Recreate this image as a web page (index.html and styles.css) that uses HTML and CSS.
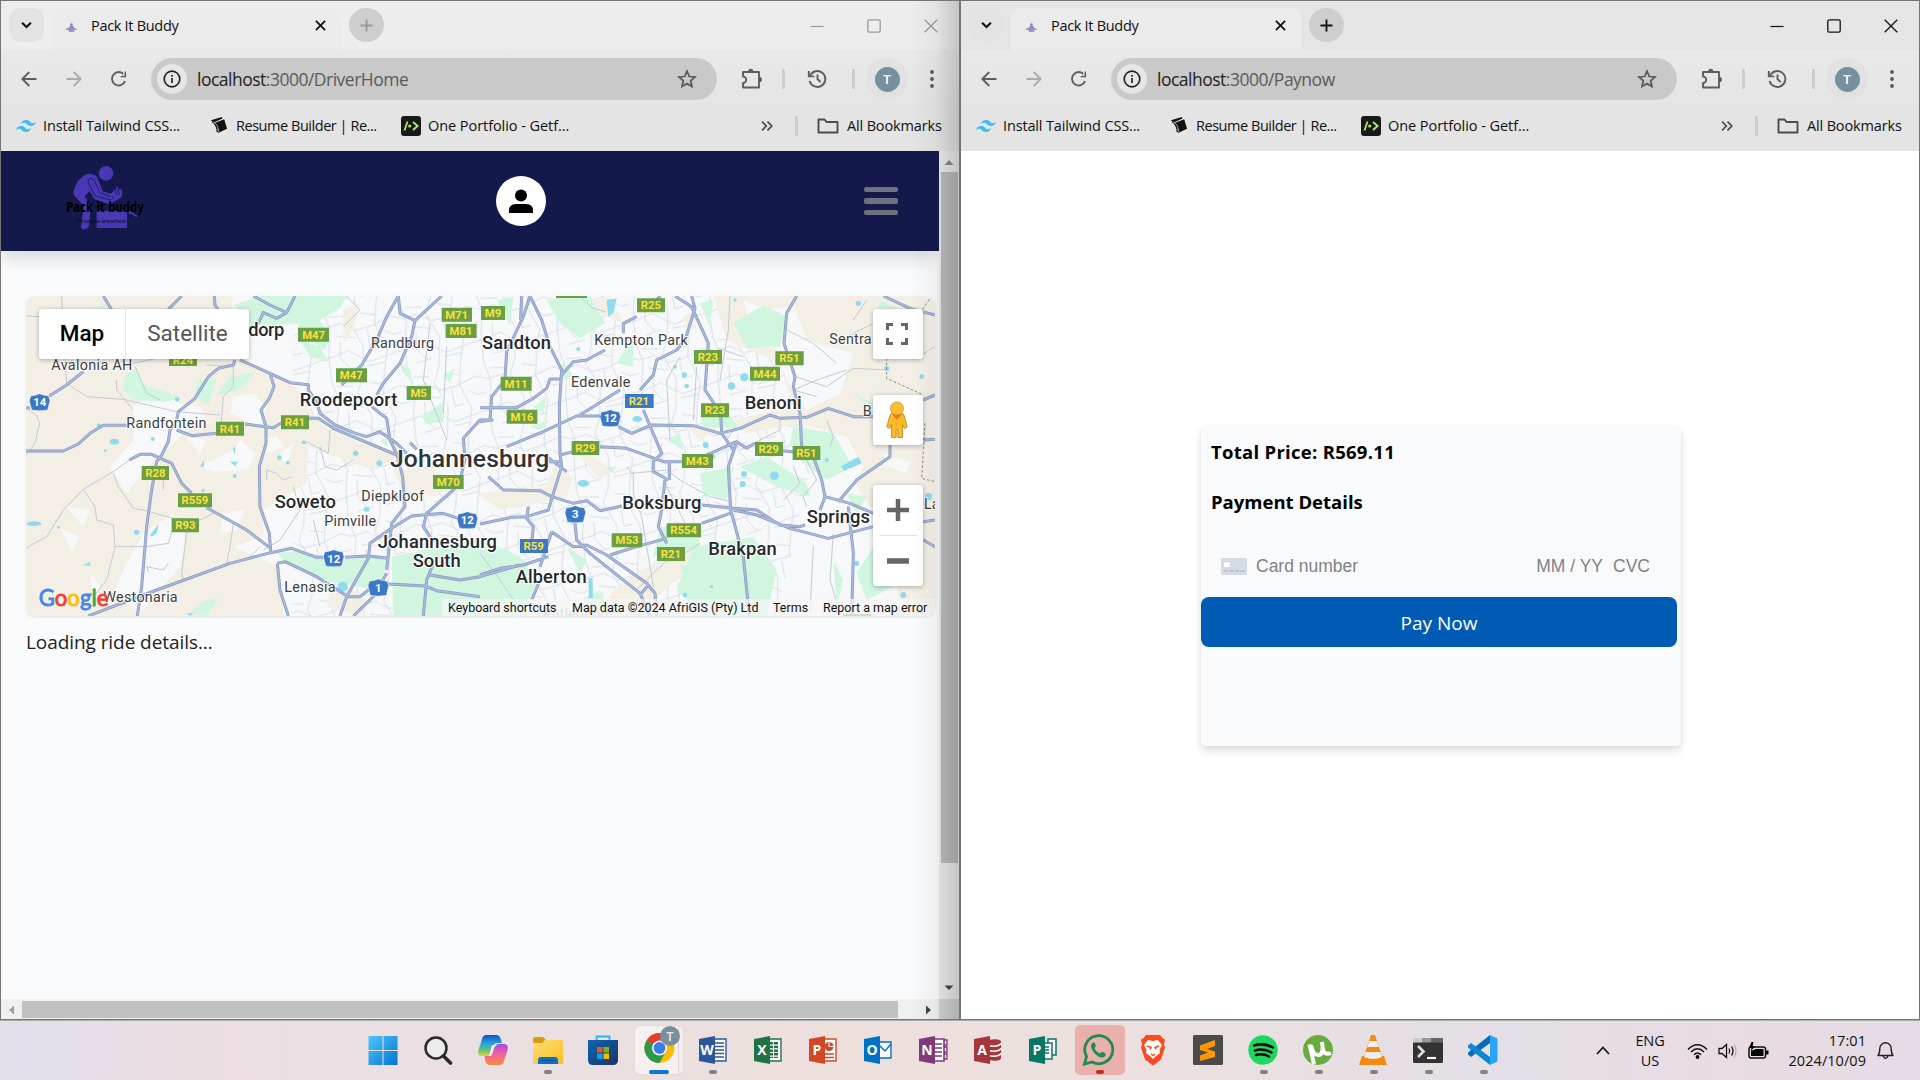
FILE: index.html
```html
<!DOCTYPE html>
<html lang="en">
<head>
<meta charset="utf-8">
<title>Pack It Buddy</title>
<link rel="stylesheet" href="styles.css">
</head>
<body>
<svg class="defs" width="0" height="0">
  <defs>
    <symbol id="i-chev" viewBox="0 0 12 8"><path d="M1.2 1.5 6 6.2l4.800-4.700" fill="none" stroke="#111" stroke-width="2.300"/></symbol>
    <symbol id="i-fav" viewBox="0 0 12 10"><circle cx="6" cy="1.800" r="1.500" fill="#8a7de0"/><path d="M3 5 5 3 8.500 4l.5 2H3z" fill="#8d82d4"/><path d="M0 6h11l1 1.500H0z" fill="#777380"/><path d="M3 7.500h6V10H3z" fill="#9f8ff0"/></symbol>
    <symbol id="i-close" viewBox="0 0 12 12"><path d="M1 1l10 10M11 1 1 11" fill="none" stroke="#111" stroke-width="2"/></symbol>
    <symbol id="i-plus" viewBox="0 0 14 14"><path d="M7 .5v13M.5 7h13" stroke="currentColor" stroke-width="2" fill="none"/></symbol>
    <symbol id="i-back" viewBox="0 0 16 16"><path d="M15.500 8H1.500M8.300 1 1.300 8l7 7" fill="none" stroke="currentColor" stroke-width="1.900"/></symbol>
    <symbol id="i-fwd" viewBox="0 0 16 16"><path d="M.5 8h14M7.700 1l7 7-7 7" fill="none" stroke="currentColor" stroke-width="1.900"/></symbol>
    <symbol id="i-reload" viewBox="0 0 16 16"><path d="M14 10.200A6.700 6.700 0 1 1 13 3.600L14.800 5.600" fill="none" stroke="#5a5e62" stroke-width="1.900"/><path d="M15 0v6.200H9z" fill="#5a5e62"/><path d="M13 .9v3.300H9.600" fill="none" stroke="#e6e6e6" stroke-width="1.200"/></symbol>
    <symbol id="i-info" viewBox="0 0 18 18"><circle cx="9" cy="9" r="7.800" fill="none" stroke="#222" stroke-width="1.700"/><path d="M9 8v5M9 5v1.800" stroke="#222" stroke-width="1.700"/></symbol>
    <symbol id="i-star" viewBox="0 0 20 20"><path d="M10 2.200l2.300 5.300 5.700.5-4.300 3.800 1.300 5.700-5-3-5 3 1.300-5.700L2 8l5.700-.5z" fill="none" stroke="#55585c" stroke-width="1.700"/></symbol>
    <symbol id="i-ext" viewBox="0 0 22 22"><path d="M3 4h16v15.500H3v-4.500a3 3 0 0 0 0-6.500z" fill="none" stroke="#5a5e62" stroke-width="1.900" stroke-linejoin="round"/><path d="M8.500 3.500a2.300 2.300 0 0 1 4.600 0zM19.300 9.300a2.300 2.300 0 0 1 0 4.600z" fill="#5a5e62" stroke="#5a5e62"/></symbol>
    <symbol id="i-hist" viewBox="0 0 20 20"><path d="M2.600 12A8 8 0 1 0 4.200 4.800L1.800 7.300" fill="none" stroke="#5a5e62" stroke-width="1.900"/><path d="M1.800 2v5.400h5.500M10.500 5.500V10l3.200 3.200" fill="none" stroke="#5a5e62" stroke-width="1.900"/></symbol>
    <symbol id="i-more" viewBox="0 0 4 18"><circle cx="2" cy="2" r="1.900"/><circle cx="2" cy="9" r="1.900"/><circle cx="2" cy="16" r="1.900"/></symbol>
    <symbol id="i-tw" viewBox="0 0 20 12"><path d="M5 4q1.200-4 5-4c3.800 0 4 2.800 6 3.200 1.300.3 2.500-.2 4-1.200q-1.200 4-5 4c-3.800 0-4-2.600-6-3.200Q7 2.400 5 4zM0 10q1.200-4 5-4c3.800 0 4 2.800 6 3.200 1.300.3 2.500-.2 4-1.200q-1.200 4-5 4c-3.800 0-4-2.600-6-3.200Q2 8.400 0 10z" fill="#38bdf8"/></symbol>
    <symbol id="i-resume" viewBox="0 0 18 18"><path d="M0 3.500 11.500 0l.6 1.500L2.500 6z" fill="#111"/><path d="M3 6.500 14 2.500l3 10L7.500 17 7 12z" fill="#111"/><path d="M1.500 5.300Q6 7.500 6.800 16" fill="none" stroke="#111" stroke-width="1.400"/><path d="M2.500 5.500Q7.500 7 8.200 16" fill="none" stroke="#e6e6e6" stroke-width=".7"/></symbol>
    <symbol id="i-one" viewBox="0 0 20 20"><rect width="20" height="20" rx="3" fill="#171a17"/><path d="M3.500 14.500 6.500 5.500" stroke="#a7e86a" stroke-width="1.800"/><circle cx="8.700" cy="10" r="1.600" fill="#a7e86a"/><path d="M12 6l4.600 4-4.600 4" fill="none" stroke="#a7e86a" stroke-width="2"/></symbol>
    <symbol id="i-dbl" viewBox="0 0 12 10"><path d="M1 .7 5.300 5 1 9.300M6.500.7 10.800 5 6.500 9.300" fill="none" stroke="#4a4d50" stroke-width="1.700"/></symbol>
    <symbol id="i-folder" viewBox="0 0 22 16"><path d="M1.500 14.500v-13h6l2 2.500h11v10.500z" fill="none" stroke="#4a4d50" stroke-width="1.900" stroke-linejoin="round"/></symbol>
    <symbol id="i-min" viewBox="0 0 14 14"><path d="M.5 7.500h13" stroke="currentColor" stroke-width="1.200"/></symbol>
    <symbol id="i-max" viewBox="0 0 14 14"><rect x=".8" y=".8" width="12.400" height="12.400" rx="1.500" fill="none" stroke="currentColor" stroke-width="1.300"/></symbol>
    <symbol id="i-x" viewBox="0 0 14 14"><path d="M.7.7l12.600 12.600M13.300.7.700 13.300" stroke="currentColor" stroke-width="1.300"/></symbol>
    <symbol id="nat" viewBox="0 0 64 54"><path d="M5 8Q20 6 32 1q12 5 27 7l4 14-7 28q-24 5-48 0L1 22z" fill="#3c78c8" stroke="#fff" stroke-width="1.500"/></symbol>
    <linearGradient id="gw" x2="1" y2="1"><stop offset="0" stop-color="#4cc9fb"/><stop offset="1" stop-color="#0473d0"/></linearGradient>
    <linearGradient id="gs" x2="1" y2="1"><stop offset="0" stop-color="#0a66b4"/><stop offset="1" stop-color="#1e3560"/></linearGradient>
    <linearGradient id="gf" x2="1" y2="1"><stop offset="0" stop-color="#ffdf70"/><stop offset="1" stop-color="#f8bd2a"/></linearGradient>
    <linearGradient id="c1" x2="0" y2="1"><stop offset="0" stop-color="#1450c8"/><stop offset=".4" stop-color="#22a4e0"/><stop offset=".75" stop-color="#6cc46a"/><stop offset="1" stop-color="#e8d23c"/></linearGradient>
    <linearGradient id="c2" x2="0" y2="1"><stop offset="0" stop-color="#a64ae8"/><stop offset=".5" stop-color="#f0649a"/><stop offset="1" stop-color="#ff8a3c"/></linearGradient>
    <pattern id="streets" width="230" height="210" patternUnits="userSpaceOnUse" patternTransform="rotate(-7)">
      <path d="M0 40 35 52 80 44 120 70 170 62 230 40M0 150 50 140 90 128 150 168 230 150M30 0 45 60 32 130 30 210M125 0 105 45 138 120 125 210M190 0 180 60 208 135 190 210M60 80 118 92M45 20 95 25M145 180 198 175M60 190 110 180M70 98 66 148 90 180M142 20 182 30M155 70 158 122 185 118M205 80 230 95M0 95 28 92" fill="none" stroke="#d6dce7" stroke-width="2.800"/>
    </pattern>
  </defs>
</svg>

<div class="desktop">
  <main class="windows">
    <section class="window inactive">
      <div class="tabs">
        <span class="tabmenu"><svg width="11" height="8"><use href="#i-chev"/></svg></span>
        <div class="tab"><svg class="fav" width="11" height="9"><use href="#i-fav"/></svg><span class="tabtitle">Pack It Buddy</span><svg width="11" height="11"><use href="#i-close"/></svg></div>
        <span class="newtab"><svg width="13" height="13"><use href="#i-plus"/></svg></span>
        <div class="winctl"><span><svg width="14" height="14"><use href="#i-min"/></svg></span><span><svg width="14" height="14"><use href="#i-max"/></svg></span><span><svg width="14" height="14"><use href="#i-x"/></svg></span></div>
      </div>
      <div class="toolbar">
        <span class="nav"><svg width="16" height="16"><use href="#i-back"/></svg></span>
        <span class="nav dim"><svg width="16" height="16"><use href="#i-fwd"/></svg></span>
        <span class="nav"><svg width="16" height="16"><use href="#i-reload"/></svg></span>
        <div class="omnibox"><span class="info"><svg width="18" height="18"><use href="#i-info"/></svg></span><span class="url">localhost<i>:3000/DriverHome</i></span><svg width="20" height="20"><use href="#i-star"/></svg></div>
        <span class="ext"><svg width="22" height="22"><use href="#i-ext"/></svg></span>
        <span class="sep s1"></span>
        <span class="hist"><svg width="20" height="20"><use href="#i-hist"/></svg></span>
        <span class="sep s2"></span>
        <span class="profile"><b>T</b></span>
        <span class="more"><svg width="4" height="18"><use href="#i-more"/></svg></span>
      </div>
      <div class="bookmarks">
        <svg width="20" height="12"><use href="#i-tw"/></svg><span class="bm b1">Install Tailwind CSS...</span>
        <svg width="17" height="17"><use href="#i-resume"/></svg><span class="bm b2">Resume Builder | Re...</span>
        <svg width="20" height="20"><use href="#i-one"/></svg><span class="bm b3">One Portfolio - Getf...</span>
        <svg class="dbl" width="12" height="10"><use href="#i-dbl"/></svg><span class="sep s3"></span>
        <svg width="22" height="16"><use href="#i-folder"/></svg><span class="bm b4">All Bookmarks</span>
      </div>
      <div class="viewport">
        <div class="page driver">
          <header class="appbar">
            <svg class="logo" width="84" height="72" viewBox="192 492 252 216">
              <g fill="#4a37b5"><circle cx="318" cy="520" r="22"/>
              <path d="M222 572q4-30 34-48 22-8 36 8l16 42 24 7 14-14 4-8 4 2 4 8 6-3 3 10-2 16-28 16-14 3-40-14-14-24-15 16 17 28v22l-5 42q-12 14-23 2l8-66-22-24q-10-8-9-21z"/>
              <path d="M290 632h91v52h-91zM385 630l28 18-2 4-26-14z"/></g>
              <path d="M264 546q2-14 12-10 8 2 12 16l12 26 32 12M264 546l22 42 46 12q10-2 6-12M344 562l6 24M352 562l6 22" fill="none" stroke="#13194b" stroke-width="2.500"/>
              <text x="198" y="635" textLength="234" lengthAdjust="spacingAndGlyphs" class="brand">Pack it buddy</text>
              <text x="228" y="668" textLength="150" lengthAdjust="spacingAndGlyphs" class="tagline">Move you anywhere</text>
            </svg>
            <span class="user"><svg width="24" height="24" viewBox="0 0 24 24"><circle cx="12" cy="6.500" r="6"/><path d="M0 24v-2.500Q0 15 7 15h10q7 0 7 6.500V24z"/></svg></span>
            <span class="burger"><i></i><i></i><i></i></span>
          </header>
          <div class="mapbox">
            <svg class="map" width="909" height="320" viewBox="78 48 2727 960">
              <rect x="78" y="48" width="2727" height="960" fill="#f7f8f9"/>
              <rect x="880" y="48" width="1560" height="960" fill="url(#streets)"/>
              <g fill="#f4efe5">
                <path d="M78 48H700L690 130 740 240 900 330 930 400 990 450 1190 530 1120 570 925 500 920 610 790 690 790 770 700 800 840 860 850 1008H78z"/>
                <path d="M2140 48H2805V1008H2700L2670 700 2540 660 2590 560 2540 470 2400 430 2240 460 2200 420 2380 380 2340 250 2180 180z"/>
                <path d="M1430 640 1640 620 1660 560 1720 590 1700 650 1500 690zM1960 850 2080 780 2110 840 1990 930 1940 1008H1780L1850 920zM1180 570 1280 560 1380 610 1300 650 1200 620zM1030 90 1080 70 1060 150 1030 190zM1780 60 1830 48 1870 130 1800 100zM2040 120 2080 90 2090 150zM2380 800 2450 850 2420 1000 2370 930zM1000 890 1100 960 1080 1008 980 980zM1700 480 1800 600 1840 570zM2040 420 2100 480 2170 430 2090 440z"/>
              </g>
              <g fill="#f7f8f9">
                <path d="M400 380 460 330 540 370 600 380 630 430 560 450 510 500 440 560 380 640 330 560 400 480zM600 560 700 510 720 480 770 520 740 570 640 575zM700 350 760 340 800 380 780 440 690 400zM430 760 520 700 560 760 540 860 420 1000 340 940 370 870zM2290 90 2380 80 2420 180 2560 220 2520 340 2420 390 2360 300zM2430 560 2560 600 2620 700 2520 820 2420 980 2340 960 2380 800zM840 520 880 490 860 560zM670 700 730 690 710 750 660 760zM2650 520 2730 545 2720 580 2660 560z"/>
                <path d="M2230 60 2310 90 2280 120 2240 100zM500 90 560 110 540 140zM200 680 270 690 250 740zM180 745 240 770 215 815zM560 470 620 480 600 520zM270 880 300 920 280 960zM790 470 830 470 850 500 800 520z"/>
              </g>
              <g fill="#d0f6e0">
                <path d="M700 75 780 48H1040L1020 85 960 120 990 170 975 210 930 180 890 130 760 140 730 100zM370 330 375 285 410 265 430 315 545 350 500 365 400 360zM590 300 650 295 625 375 585 350zM690 290 770 275 720 330 650 345zM830 820 900 812 980 840 1170 830 1130 930 960 900 860 850zM1175 830 1440 775 1560 830 1610 900 1570 1008H1180zM570 1000 610 962 655 955 620 1008zM1265 410 1330 365 1330 425 1280 432zM1330 285 1365 265 1350 310zM900 180 960 200 985 245 930 230zM280 85 320 70 310 90zM1140 480 1165 475 1160 500zM1195 240 1230 270 1240 310 1210 280z"/>
                <path d="M1640 60 1770 48 1815 130 1740 175 1680 130zM2200 130 2290 75 2360 110 2340 200 2240 205zM2380 440 2500 460 2560 560 2480 600 2400 540 2370 490zM2100 400 2180 395 2220 445 2110 440zM2080 800 2260 770 2330 870 2300 1008H2110L2030 930zM1980 740 2090 750 2100 800 1960 830zM2570 880 2620 800 2680 920 2600 960zM2220 560 2300 530 2420 610 2430 650 2330 620zM2640 60 2700 90 2680 150 2630 130zM2100 580 2200 560 2180 660 2110 640zM2560 340 2620 370 2700 420 2620 400zM1700 800 1760 840 1740 880zM1880 200 1900 190 1900 260 1850 250zM1690 240 1720 290 1680 300zM2040 850 2100 880 2060 940zM2540 640 2600 650 2570 700zM2500 840 2530 900 2510 980zM1740 960 1800 930 1820 990zM1600 380 1640 350 1630 400zM1590 440 1650 420 1620 450zM1490 60 1540 50 1530 140 1510 90zM1820 560 1850 560 1830 580zM2100 70 2140 60 2130 140zM2000 480 2040 460 2050 510z"/>
              </g>
              <g fill="#8fdaee">
                <ellipse cx="343" cy="485" rx="14" ry="9"/><ellipse cx="102" cy="731" rx="22" ry="7"/><path d="M450 765 476 732 470 760 455 770zM250 855 270 846 272 858zM690 545 714 545 705 558zM600 560 612 540 612 560zM560 1000 580 1000 570 1008zM698 505 706 500 705 525z"/><circle cx="531" cy="358" r="7"/><circle cx="458" cy="477" r="6"/><circle cx="297" cy="436" r="6"/><circle cx="410" cy="757" r="8"/><circle cx="838" cy="533" r="7"/><circle cx="912" cy="487" r="6"/><circle cx="1067" cy="520" r="8"/><ellipse cx="1100" cy="688" rx="9" ry="7"/><circle cx="1028" cy="920" r="15"/><circle cx="1138" cy="550" r="9"/><circle cx="609" cy="632" r="5"/><circle cx="704" cy="588" r="6"/><circle cx="863" cy="548" r="6"/><circle cx="316" cy="512" r="4"/><circle cx="176" cy="742" r="4"/>
                <ellipse cx="1750" cy="610" rx="17" ry="10"/><path d="M1765 895h12l2 60h-12zM2520 560 2575 530 2585 550 2550 565zM1820 60 1850 55 1840 100 1825 110z"/><circle cx="2194" cy="318" r="11"/><circle cx="2053" cy="285" r="8"/><circle cx="2060" cy="318" r="7"/><circle cx="2117" cy="495" r="9"/><circle cx="2233" cy="292" r="12"/><circle cx="2323" cy="587" r="13"/><circle cx="2232" cy="582" r="9"/><circle cx="2228" cy="612" r="9"/><circle cx="2575" cy="70" r="8"/><circle cx="2660" cy="265" r="8"/><circle cx="2765" cy="290" r="7"/><ellipse cx="1912" cy="417" rx="15" ry="9"/><circle cx="2570" cy="850" r="8"/><circle cx="2710" cy="945" r="9"/><circle cx="2055" cy="945" r="7"/><circle cx="2480" cy="540" r="6"/><circle cx="2785" cy="650" r="11"/><circle cx="2025" cy="260" r="6"/><circle cx="2205" cy="60" r="5"/><circle cx="1735" cy="207" r="6"/><circle cx="2140" cy="530" r="6"/><circle cx="2535" cy="565" r="7"/><circle cx="2135" cy="920" r="5"/>
              </g>
              <g class="minor">
                <path d="M185 48 188 100 200 310 260 350 370 358 430 372 530 395 660 405M78 108 120 110M400 250 470 235M405 260 440 340 480 360M350 300 350 330 400 390M78 384 110 405 118 430 105 490 78 525M700 255 700 320 670 350 662 450M78 804 140 770 190 690 250 628 340 575 388 540M250 628 285 680 290 720 340 735 345 800 320 900 280 950M340 580 355 620 400 685 430 690 520 715 600 720 640 700M345 800 440 800 505 790 520 740M505 850 490 870 440 860 445 875M560 740 555 800 545 880 550 900M700 730 690 800 680 850M470 560 490 600 490 630M620 255 700 260M990 450 985 520 920 485"/>
                <path d="M1040 48 1080 90 1030 140M800 600 800 570 830 580 850 600 875 590M960 500 975 560 1010 570 1060 540M1740 50 1780 85 1815 95M1880 560 1895 580 2000 570 2040 600 2130 650 2190 665M1900 575V640L1925 710 1960 920M2190 48 2185 150 2160 300M2155 205 2230 230M2360 150 2440 190 2510 250M2560 120 2600 60M2220 510 2260 490 2340 450 2340 420M2480 420 2500 470 2490 500M2385 290 2480 320 2560 265 2660 270M2420 540 2450 600 2410 650 2420 680M2540 170 2640 120M2740 240 2805 200M1910 930 1990 850 2025 830M2100 790 2040 830M1990 600 2030 680 2060 740M1440 820 1500 900 1540 960M2380 560 2400 610 2350 660M2200 450 2180 480M2450 350 2380 330 2450 300 2540 270M2040 230 2000 300 2010 480M2090 260 2080 420M2440 800 2430 1000M2500 760 2490 900 2520 1000M1290 130 1270 300 1340 480M1340 200 1330 400M790 810 840 780 900 690 880 620M940 720 960 800M560 150 500 230M740 840 780 800"/>
              </g>
              <g class="roads">
                <g id="net">
                  <path d="M78 513H190L235 492 270 460 310 436H380M530 450 575 467 650 460M735 432 820 443 845 428M925 415H955L1000 445 1190 525M250 275 200 315 148 348M78 384H90M310 48 335 90M545 48 505 88M643 48 645 75 655 90M885 48 860 98 810 75 760 48M860 98 830 115 790 98 775 130"/>
                  <path d="M705 240 700 255 655 265 625 290 585 355 535 395 530 420 510 450 505 485 485 525 470 545 455 630 440 740 425 920 412 1008M720 240 810 280 870 308 925 314V330L950 365 960 400 1005 435 1060 458 1100 470 1140 455 1190 490 1220 520M810 280 822 320 808 355 783 390 798 440V490L778 560 780 680 808 760 812 815"/>
                  <path d="M265 1008 470 930 690 850 812 818 875 805 950 832H970M1035 832 1105 828 1165 835M388 540 420 523H455L515 550 545 610 575 640M620 683 740 750 808 802M1195 48 1160 110 1130 180 1085 255 1025 315M1195 48 1200 100 1245 122 1325 48M1245 122 1235 170 1200 250 1150 310 1130 345M1115 380 1160 415 1170 480 1190 520 1208 590 1215 680 1175 730 1170 780 1160 870"/>
                  <path d="M1395 540 1380 600 1360 630 1280 700 1270 740 1300 785M1175 745 1235 708 1330 700 1375 715M1175 745 1110 790 1105 835 1040 950 1020 1008M1160 880 1120 950 1060 1008M1165 912 1275 918 1310 932 1440 950M832 850 855 845 950 890 1045 950H1080L1130 910M832 850 840 930 865 1008M1480 420 1440 420 1390 475 1395 540M1560 855 1440 890 1380 900 1290 885M1300 850 1280 900 1270 1008M1230 488 1250 508"/>
                  <g transform="translate(1440 0)">
                    <path d="M150 48 130 110 80 215 75 300 35 350 30 420 0 425M125 48 122 120M150 48 185 120 210 200 245 270 238 380 240 520 245 560 220 640 205 690 140 710 95 712 0 732M0 383H110L160 355 200 325 210 297H245M245 285 280 245 320 240 375 210M80 500 190 455 290 408H360M415 440 455 460 515 435 640 437 720 460 780 445 870 405 900 415 980 412 1045 385 1120 410H1180"/>
                    <path d="M585 48 635 80 685 190 675 330 722 400 725 460 760 510M635 48 645 85 615 180 590 210 530 240 520 285 480 330M490 390 545 520 520 545V575L565 600M430 160V130L470 110M540 48 530 60M240 525 280 515M360 500 440 505 550 545H610M670 530 770 485 800 505 825 490M568 545V600M555 600 545 690 535 740 560 790M25 590 70 630 180 632 215 650 280 670 320 662 360 692 425 678M665 675 760 685 830 690 900 735 960 740 975 735M760 690 830 705 930 745 1045 775 1180 740"/>
                    <path d="M285 730 290 780 330 820 480 940 510 1008M215 755 280 800 320 795 380 825 500 910 525 940 530 1008M390 825 470 800 560 775M480 945 505 915M665 730 750 700M770 485 745 560 752 690 790 830 808 1008M950 48 920 100 912 190 945 290 940 320 960 400 965 500M905 512 940 515M1000 530 1025 600 1035 650 1110 670 1180 700M1035 650 1020 690M1105 680 1120 820 1115 1008M1230 495V530L1130 600 1075 665M1210 48 1290 85 1365 105M1330 360 1365 345M1330 780 1365 800M1330 725 1365 720M1330 480 1365 478M0 885 60 865 130 855 205 830M215 755 180 860M180 900 155 960M145 680 140 715 160 740 155 790M300 405 420 330M200 530 260 575M200 545H245"/>
                  </g>
                </g>
              </g>
              <use href="#net" class="fill"/>
              <path d="M2660 220V295L2770 345M2775 430 2765 595 2805 605M2760 100 2790 55" fill="none" stroke="#777" stroke-width="2.500" stroke-dasharray="8 6"/>
              <g class="shield">
                <path d="M1325 83h91v42h-91zM1337 132h93v42h-93zM894 143h93v42h-93zM1008 265h93v42h-93zM1220 318h73v42h-73zM507 219h84v39h-84zM648 425h84v42h-84zM843 406h84v42h-84zM425 558h82v42h-82zM534 640h102v42H534zM515 715h82v42h-82zM1299 585h92v42h-92zM1443 78h72v42h-72zM1911 55h84v42h-84zM1668 15h93v39h-93zM2082 210h84v42h-84zM2326 214h85v42h-85zM2250 260h90v42h-90zM1502 290h93v42h-93zM1520 389h92v42h-92zM2103 370h84v42h-84zM1715 483h83v42h-83zM2046 522h93v42h-93zM2265 486h84v42h-84zM2378 498h83v42h-83zM2000 730h103v42h-103zM1835 760h92v42h-92zM1971 801h84v42h-84zM2530 1002h84v6h-84z" fill="#6a9f43"/>
                <path d="M1875 342h86v42h-86zM1560 777h84v42h-84z" fill="#3c78c8"/>
                <text x="1370" y="116">M71</text><text x="1383" y="165">M81</text><text x="941" y="176">M47</text><text x="1054" y="298">M47</text><text x="1256" y="351">M5</text><text x="549" y="252">R24</text><text x="690" y="458">R41</text><text x="885" y="439">R41</text><text x="466" y="591">R28</text><text x="585" y="673">R559</text><text x="556" y="748">R93</text><text x="1345" y="619">M70</text><text x="1479" y="111">M9</text><text x="1953" y="88">R25</text><text x="2124" y="243">R23</text><text x="2368" y="247">R51</text><text x="2295" y="293">M44</text><text x="1548" y="323">M11</text><text x="1566" y="422">M16</text><text x="1917" y="375">R21</text><text x="2145" y="403">R23</text><text x="1756" y="515">R29</text><text x="2092" y="555">M43</text><text x="2306" y="519">R29</text><text x="2419" y="531">R51</text><text x="2051" y="763">R554</text><text x="1881" y="793">M53</text><text x="2013" y="834">R21</text><text x="1601" y="810">R59</text>
              </g>
              <g class="nat">
                <use href="#nat" x="87" y="340" width="64" height="54"/><use href="#nat" x="1370" y="694" width="64" height="54"/><use href="#nat" x="969" y="808" width="64" height="54"/><use href="#nat" x="1103" y="896" width="64" height="54"/><use href="#nat" x="1799" y="388" width="64" height="54"/><use href="#nat" x="1694" y="676" width="64" height="54"/>
                <text x="119" y="379">14</text><text x="1402" y="733">12</text><text x="1001" y="848">12</text><text x="1135" y="936">1</text><text x="1831" y="427">12</text><text x="1726" y="715">3</text>
              </g>
              <g class="town">
                <text x="154" y="270" textLength="243">Avalonia AH</text><text x="379" y="443" textLength="240">Randfontein</text><text x="1113" y="205" textLength="189">Randburg</text><text x="1084" y="664" textLength="188">Diepkloof</text><text x="973" y="739" textLength="155">Pimville</text><text x="853" y="935" textLength="154">Lenasia</text><text x="310" y="965" textLength="223">Westonaria</text><text x="1783" y="195" textLength="280">Kempton Park</text><text x="1713" y="320" textLength="178">Edenvale</text><text x="2488" y="192" textLength="127">Sentra</text><text x="2588" y="407">B</text><text x="2772" y="688">La</text><text x="1628" y="1018" textLength="198" opacity=".4">Katlehong</text>
              </g>
              <g class="city">
                <text x="745" y="168" textLength="108">dorp</text><text x="899" y="378" textLength="293">Roodepoort</text><text x="824" y="685" textLength="184">Soweto</text><text x="1133" y="804" textLength="358">Johannesburg</text><text x="1238" y="860" textLength="144">South</text><text x="1446" y="206" textLength="207">Sandton</text><text x="2234" y="386" textLength="171">Benoni</text><text x="1867" y="688" textLength="237">Boksburg</text><text x="2420" y="730" textLength="190">Springs</text><text x="2125" y="826" textLength="205">Brakpan</text><text x="1547" y="908" textLength="213">Alberton</text><text class="capital" x="1170" y="560" textLength="478">Johannesburg</text>
              </g>
              <text class="google" x="116" y="978" textLength="209" lengthAdjust="spacingAndGlyphs"><tspan fill="#4285f4" stroke="#4285f4">G</tspan><tspan fill="#ea4335" stroke="#ea4335">o</tspan><tspan fill="#fbbc04" stroke="#fbbc04">o</tspan><tspan fill="#4285f4" stroke="#4285f4">g</tspan><tspan fill="#34a853" stroke="#34a853">l</tspan><tspan fill="#ea4335" stroke="#ea4335">e</tspan></text>
            </svg>
            <div class="maptype"><span class="on">Map</span><span>Satellite</span></div>
            <div class="mapctl">
              <span class="mbtn"><svg width="22" height="22" viewBox="0 0 22 22"><path d="M1.500 7V1.500H7M15 1.500h5.500V7M20.500 15v5.500H15M7 20.500H1.500V15" fill="none" stroke="#666" stroke-width="3"/></svg></span>
              <span class="mbtn peg"><svg width="22" height="38" viewBox="0 0 22 38"><path d="M6 12 4 14 .8 26l2.700 1.500 2-4V36.500h4.700V29h1.600v7.500h4.700V23.500l2 4 2.700-1.500L18 14l-2-2z" fill="#fbb928" stroke="#b88421" stroke-width=".8"/><path d="M6 13h10l-5 6z" fill="#e07b28"/><circle cx="11" cy="7.500" r="6.500" fill="#fdbf2d" stroke="#c99228" stroke-width=".8"/></svg></span>
              <span class="zoomctl"><svg width="22" height="22" viewBox="0 0 22 22"><path d="M11 0v22M0 11h22" stroke="#666" stroke-width="4.500"/></svg><i></i><svg width="22" height="22" viewBox="0 0 22 22"><path d="M0 11h22" stroke="#666" stroke-width="5.500"/></svg></span>
            </div>
            <div class="attrib"><span class="a1">Keyboard shortcuts</span><span class="a2">Map data ©2024 AfriGIS (Pty) Ltd</span><span class="a3">Terms</span><span class="a4">Report a map error</span></div>
          </div>
          <p class="loading">Loading ride details...</p>
        </div>
        <div class="vbar"><svg width="20" height="21" viewBox="0 0 20 21"><path d="M5.500 14 10 9l4.500 5z" fill="#8a8a8a"/></svg><i></i><svg width="20" height="21" viewBox="0 0 20 21"><path d="M5.500 9.500 10 14l4.500-4.500z" fill="#444"/></svg></div>
        <div class="hbar"><svg width="21" height="20" viewBox="0 0 21 20"><path d="M13 5.500 8 10l5 4.500z" fill="#a0a0a0"/></svg><i></i><svg width="21" height="20" viewBox="0 0 21 20"><path d="M8 5.500 13 10l-5 4.500z" fill="#444"/></svg></div>
        <div class="corner"></div>
      </div>
      <div class="shade"></div>
    </section>

    <section class="window active">
      <div class="tabs">
        <span class="tabmenu"><svg width="11" height="8"><use href="#i-chev"/></svg></span>
        <div class="tab"><svg class="fav" width="11" height="9"><use href="#i-fav"/></svg><span class="tabtitle">Pack It Buddy</span><svg width="11" height="11"><use href="#i-close"/></svg></div>
        <span class="newtab"><svg width="13" height="13"><use href="#i-plus"/></svg></span>
        <div class="winctl"><span><svg width="14" height="14"><use href="#i-min"/></svg></span><span><svg width="14" height="14"><use href="#i-max"/></svg></span><span><svg width="14" height="14"><use href="#i-x"/></svg></span></div>
      </div>
      <div class="toolbar">
        <span class="nav"><svg width="16" height="16"><use href="#i-back"/></svg></span>
        <span class="nav dim"><svg width="16" height="16"><use href="#i-fwd"/></svg></span>
        <span class="nav"><svg width="16" height="16"><use href="#i-reload"/></svg></span>
        <div class="omnibox"><span class="info"><svg width="18" height="18"><use href="#i-info"/></svg></span><span class="url">localhost<i>:3000/Paynow</i></span><svg width="20" height="20"><use href="#i-star"/></svg></div>
        <span class="ext"><svg width="22" height="22"><use href="#i-ext"/></svg></span>
        <span class="sep s1"></span>
        <span class="hist"><svg width="20" height="20"><use href="#i-hist"/></svg></span>
        <span class="sep s2"></span>
        <span class="profile"><b>T</b></span>
        <span class="more"><svg width="4" height="18"><use href="#i-more"/></svg></span>
      </div>
      <div class="bookmarks">
        <svg width="20" height="12"><use href="#i-tw"/></svg><span class="bm b1">Install Tailwind CSS...</span>
        <svg width="17" height="17"><use href="#i-resume"/></svg><span class="bm b2">Resume Builder | Re...</span>
        <svg width="20" height="20"><use href="#i-one"/></svg><span class="bm b3">One Portfolio - Getf...</span>
        <svg class="dbl" width="12" height="10"><use href="#i-dbl"/></svg><span class="sep s3"></span>
        <svg width="22" height="16"><use href="#i-folder"/></svg><span class="bm b4">All Bookmarks</span>
      </div>
      <div class="page pay">
        <div class="card">
          <h3 class="total">Total Price: R569.11</h3>
          <h3 class="details">Payment Details</h3>
          <div class="field">
            <svg width="26" height="17" viewBox="0 0 26 17"><rect width="26" height="17" rx="1.500" fill="#d6dae5"/><rect x="3" y="4.500" width="6" height="4.500" rx="1" fill="#fff"/><path d="M3 13h21" stroke="#b5bac8" stroke-width="1.300" stroke-dasharray="4 1.500"/></svg>
            <span class="num">Card number</span><span class="exp">MM / YY</span><span>CVC</span>
          </div>
          <button class="paybtn">Pay Now</button>
        </div>
      </div>
    </section>
  </main>

  <footer class="taskbar">
    <div class="apps">
      <span class="app"><svg width="30" height="30" viewBox="0 0 30 30"><path d="M.5 1h14v14H.5zM15.500 1h14v14h-14zM.5 16h14v14H.5zM15.500 16h14v14h-14z" fill="url(#gw)"/></svg></span>
      <span class="app"><svg width="30" height="30" viewBox="0 0 30 30"><circle cx="13" cy="13" r="10.500" fill="#ececec" stroke="#2a2a2a" stroke-width="2.500"/><path d="M20.500 21l7 7" stroke="#2a2a2a" stroke-width="3.600" stroke-linecap="round"/></svg></span>
      <span class="app"><svg width="32" height="30" viewBox="0 0 32 30"><path d="M9 0h10q4 0 5 5l1 3h-5q-3 0-4 4l-2 6q-1 3-5 3H4Q0 21 1.500 15L5 4Q6 0 9 0z" fill="url(#c1)"/><path d="M23 30H13q-4 0-5-5l-.500-4H11q4 0 5-4l1.500-5q1-3 5-3H27q5 0 3.500 6L27 26q-1 4-4 4z" fill="url(#c2)"/><path d="M15 10h5q-3 1-4 5l-2 6h-2z" fill="#f4e9f2"/></svg></span>
      <span class="app run"><svg width="30" height="30" viewBox="0 0 30 30"><path d="M0 4q0-2 2-2h8l3 3-3 4H0z" fill="#dc9a12"/><path d="M0 8h9l3-3h18v24H0z" fill="url(#gf)"/><path d="M5 29v-4q0-3 3-3h14q3 0 3 3v4z" fill="#0b72c8"/><path d="M9 25.500h12" stroke="#07529a" stroke-width="1.300"/></svg></span>
      <span class="app"><svg width="30" height="30" viewBox="0 0 30 30"><path d="M8.500 6V1.500h13V6" fill="none" stroke="#25b4f5" stroke-width="1.800"/><path d="M0 5h30v20q0 5-5 5H5q-5 0-5-5z" fill="url(#gs)"/><path d="M9 12h5.500v5.500H9z" fill="#f25022"/><path d="M15.500 12H21v5.500h-5.500z" fill="#7fba00"/><path d="M9 18.500h5.500V24H9z" fill="#00a4ef"/><path d="M15.500 18.500H21V24h-5.500z" fill="#ffb900"/></svg></span>
      <span class="app chrome"><svg width="36" height="38" viewBox="0 0 36 38"><circle cx="15.500" cy="22" r="15" fill="#fbbc05"/><path d="M15.500 22 2.500 14.500A15 15 0 0 1 28.500 14.500z" fill="#e33b2e"/><path d="M15.500 22 2.500 14.500A15 15 0 0 0 15.500 37L22 25z" fill="#2a9a48"/><circle cx="15.500" cy="22" r="7.500" fill="#fff"/><circle cx="15.500" cy="22" r="6" fill="#3b7de9"/><circle cx="26" cy="10" r="10" fill="#78909c"/><text x="26" y="14.500" class="badge">T</text></svg></span>
      <span class="app run office"><svg width="30" height="30" viewBox="0 0 30 30"><path d="M15 4h13v22H15z" fill="#fff" stroke="#2b579a" stroke-width="1.400"/><path d="M17 8h9M17 11.500h9M17 15h9M17 18.500h9M17 22h9" stroke="#2b579a" stroke-width="1.500"/><path d="M1 4 17 1v28L1 26z" fill="#2b579a"/><text x="9" y="20">W</text></svg></span>
      <span class="app office"><svg width="30" height="30" viewBox="0 0 30 30"><path d="M15 4h13v22H15z" fill="#fff" stroke="#217346" stroke-width="1.400"/><path d="M18 7v16M23 7v16" stroke="#217346" stroke-width="4" stroke-dasharray="2.500 1.200"/><path d="M1 4 17 1v28L1 26z" fill="#217346"/><text x="9" y="20">X</text></svg></span>
      <span class="app office"><svg width="30" height="30" viewBox="0 0 30 30"><path d="M15 4h13v22H15z" fill="#fff" stroke="#d24726" stroke-width="1.400"/><circle cx="21" cy="11.500" r="4.500" fill="#d24726"/><path d="M21 7v4.500h5" stroke="#fff" fill="none"/><path d="M17 19h9M17 22.500h9" stroke="#d24726" stroke-width="1.600"/><path d="M1 4 17 1v28L1 26z" fill="#d24726"/><text x="9" y="20">P</text></svg></span>
      <span class="app office"><svg width="30" height="30" viewBox="0 0 30 30"><path d="M15 7h13v16H15z" fill="#fff" stroke="#0072c6" stroke-width="1.400"/><path d="M15 9l7 7 6-7" fill="none" stroke="#0072c6" stroke-width="1.500"/><path d="M1 4 17 1v28L1 26z" fill="#0072c6"/><text x="9" y="20">O</text></svg></span>
      <span class="app office"><svg width="30" height="30" viewBox="0 0 30 30"><path d="M15 4h11v22H15z" fill="#fff" stroke="#80397b" stroke-width="1.600"/><path d="M26 5h3v5h-3M26 12h3v5h-3M26 19h3v5h-3M17 9h7M17 13h7M17 17h7M17 21h7" fill="none" stroke="#80397b" stroke-width="1.300"/><path d="M1 4 17 1v28L1 26z" fill="#80397b"/><text x="9" y="20">N</text></svg></span>
      <span class="app office"><svg width="30" height="30" viewBox="0 0 30 30"><path d="M15 5q13-2 13 2v16q0 4-13 2z" fill="#a4373a"/><path d="M15 10.500q10 2 13-2M15 15.500q10 2 13-2M15 20.500q10 2 13-2" fill="none" stroke="#fff" stroke-width="1.500"/><path d="M1 4 17 1v28L1 26z" fill="#a4373a"/><text x="9" y="20">A</text></svg></span>
      <span class="app office"><svg width="30" height="30" viewBox="0 0 30 30"><path d="M20 4h8v16h-8z" fill="#fff" stroke="#077568" stroke-width="1.500"/><path d="M15 8h9v16h-9z" fill="#fff" stroke="#077568" stroke-width="1.500"/><path d="M17 12h4M17 15h4M17 18h4" stroke="#077568" stroke-width="1.500"/><path d="M1 4 17 1v28L1 26z" fill="#077568"/><text x="9" y="20">P</text></svg></span>
      <span class="app alert"><svg width="32" height="32" viewBox="0 0 32 32"><path d="M2.500 30l2-7.500A14 14 0 1 1 10 28z" fill="none" stroke="#1c8c55" stroke-width="2.800"/><path d="M11 8.500q-3 2-1.500 6 3 7 9.500 9 4 .5 5-3.500l-4-2.500-2 2q-4-1.500-5.500-5.500l1.500-2-1.500-3.500z" fill="#1c8c55"/></svg></span>
      <span class="app"><svg width="26" height="32" viewBox="0 0 26 32"><path d="M6 1h14l3 3.500 2 1-1 5 1 3-4 12-8 6-8-6-4-12 1-3-1-5 2-1z" fill="#fb4a1f"/><path d="M8 6l5 1 5-1 4 5-2.500 5 .5 3-4 3-3 3-3-3-4-3 .5-3L4 11z" fill="#fff"/><path d="M7 12l4 1.500-1 2M19 12l-4 1.500 1 2M11 20l2 1.500 2-1.500" fill="none" stroke="#fb4a1f" stroke-width="1.500"/></svg></span>
      <span class="app"><svg width="30" height="30" viewBox="0 0 30 30"><rect width="30" height="30" rx="1.500" fill="#4b4b4b"/><path d="M7 10.500 22 5v6l-8 3 8 2.500v5.500L7 26v-5.500l8-3-8-2.500z" fill="#ff9800"/></svg></span>
      <span class="app run"><svg width="30" height="30" viewBox="0 0 30 30"><circle cx="15" cy="15" r="14.700" fill="#1ed760"/><path d="M6 10.500q10-3 19 2M7 15.500q8.500-2.500 16.500 2M8 20q7-2 13 1.500" fill="none" stroke="#0a0a0a" stroke-width="2.500" stroke-linecap="round"/></svg></span>
      <span class="app run"><svg width="30" height="30" viewBox="0 0 30 30"><circle cx="15" cy="15" r="15" fill="#67ac3f"/><path d="M6.500 9.500 11 29M8 10q2 11 8 10 5-1 3-13M19.500 12q1 9 8.500 6" fill="none" stroke="#fff" stroke-width="4"/></svg></span>
      <span class="app run"><svg width="28" height="32" viewBox="0 0 28 32"><path d="M3 22h22l3 9H0z" fill="#f58a12"/><path d="M12 1h4l8 24q-10 5-20 0z" fill="#f58a12"/><path d="M10.200 7h7.600l2 6H8.200zM6.500 18h15l1.500 5q-9 4-18 0z" fill="#eee"/></svg></span>
      <span class="app run"><svg width="30" height="30" viewBox="0 0 30 30"><rect y="3" width="30" height="25" rx="1.500" fill="#333"/><path d="M0 3h9v4.500H0z" fill="#ccc"/><path d="M9 3h9v4.500H9z" fill="#999"/><path d="M18 3h12v4.500H18z" fill="#666"/><path d="M5 11l5.500 5.500L5 22" fill="none" stroke="#ddd" stroke-width="2.600"/><path d="M14 23h9" stroke="#fff" stroke-width="2.200"/></svg></span>
      <span class="app run"><svg width="32" height="32" viewBox="0 0 32 32"><path d="M23 1v8L4 23l-3-2.500v-2z" fill="#0a6cb5"/><path d="M4 9l19 14v8L1 13.500v-2z" fill="#0f86d2"/><path d="M23 1l7.500 3.500v23L23 31z" fill="#2aa5f4"/></svg></span>
    </div>
    <div class="tray">
      <svg width="14" height="9" viewBox="0 0 14 9"><path d="M1 8l6-6.500L13 8" fill="none" stroke="#111" stroke-width="1.700"/></svg>
      <span class="lang">ENG<br>US</span>
      <svg class="wifi" width="21" height="16" viewBox="0 0 21 16"><path d="M1 6.500q9.500-9.500 19 0M4 9q6.500-6.500 13 0M7 11.700q3.500-3.500 7 0" fill="none" stroke="#111" stroke-width="1.500"/><circle cx="10.500" cy="14" r="1.900"/></svg>
      <svg class="vol" width="20" height="16" viewBox="0 0 20 16"><path d="M1 5.500h3L8.500 1.500v13L4 10.500H1z" fill="none" stroke="#111" stroke-width="1.300"/><path d="M11 5.500q1.500 2.500 0 5M13.500 3.500q3 4.500 0 9" fill="none" stroke="#111" stroke-width="1.300"/><path d="M16 1.500q4 6.500 0 13" fill="none" stroke="#aaa" stroke-width="1.200"/></svg>
      <svg class="bat" width="21" height="17" viewBox="0 0 21 17"><rect x="1" y="5" width="16.500" height="11" rx="2" fill="none" stroke="#111" stroke-width="1.500"/><path d="M3 14V9l5-2h7.500v7zM18 8.500h2.500v4H18zM3.500 0 1 6h2.500L2.500 9.500 7 4.500H4.500L5.500 0z"/></svg>
      <span class="clock">17:01<br>2024/10/09</span>
      <svg width="17" height="19" viewBox="0 0 17 19"><path d="M1 14.500q1.800-2 1.800-7a5.700 5.700 0 0 1 11.400 0q0 5 1.800 7zM6 15q2.500 5 5 0" fill="none" stroke="#222" stroke-width="1.400" stroke-linejoin="round"/></svg>
    </div>
  </footer>
</div>
</body>
</html>
```
FILE: styles.css
```css
* { box-sizing: border-box; }
body { margin: 0; width: 1920px; height: 1080px; overflow: hidden; font-family: "Open Sans", "Noto Sans", sans-serif; color: #111; }
.defs { position: absolute; }
svg { flex: none; display: block; }
.desktop { display: flex; flex-direction: column; height: 1080px; }
.windows { display: flex; height: 1020px; }
.window { width: 960px; height: 1020px; border: 1px solid #757575; display: flex; flex-direction: column; position: relative; background: #e5e5e5; }

.tabs { height: 49px; display: flex; align-items: flex-start; padding: 7px 0 0 8px; background: #ededed; }
.active .tabs { background: #e5e5e5; }
.tabmenu { width: 35px; height: 34px; border-radius: 12px; background: #e3e3e3; display: flex; align-items: center; justify-content: center; }
.tab { margin-left: 7px; width: 291px; height: 42px; border-radius: 12px 12px 0 0; background: #ebebeb; display: flex; align-items: center; padding: 0 16px 8px 15px; }
.fav { margin-top: 4px; }
.tabtitle { flex: 1; margin-left: 14px; font-size: 14.500px; letter-spacing: -.3px; }
.newtab { margin-left: 7px; width: 35px; height: 34px; border-radius: 17px; background: #cecece; display: flex; align-items: center; justify-content: center; }
.winctl { margin-left: auto; display: flex; height: 36px; color: #111; }
.inactive .winctl, .inactive .newtab { color: #999; }
.winctl span { width: 57px; display: flex; align-items: center; justify-content: center; }

.toolbar { height: 58px; display: flex; align-items: center; padding-left: 5px; background: linear-gradient(#e9e9e9, #e4e4e4); }
.nav { width: 45px; display: flex; justify-content: center; color: #5a5e62; }
.nav.dim { color: #acacac; }
.omnibox { margin-left: 10px; width: 566px; height: 42px; border-radius: 21px; background: #c9c9c9; display: flex; align-items: center; padding: 0 20px 0 6px; }
.info { width: 30px; height: 30px; border-radius: 50%; background: #e6e6e6; display: flex; align-items: center; justify-content: center; }
.url { margin-left: 10px; flex: 1; font-size: 17.500px; letter-spacing: -.5px; color: #222; }
.url i { font-style: normal; color: #5a5a5a; }
.ext { margin-left: 17px; width: 34px; display: flex; justify-content: center; }
.sep { width: 3px; height: 20px; background: #cdcdcd; border-radius: 1px; }
.s1 { margin-left: 14px; }
.hist { margin-left: 15px; width: 34px; display: flex; justify-content: center; }
.s2 { margin-left: 18px; }
.profile { margin-left: 11px; width: 42px; height: 42px; border-radius: 50%; background: #e2e2e2; display: flex; align-items: center; justify-content: center; }
.profile b { width: 25px; height: 25px; border-radius: 50%; background: #78909c; color: #fff; font: 500 13px/25px Roboto, sans-serif; text-align: center; }
.more { margin-left: 7px; width: 34px; display: flex; justify-content: center; fill: #55585c; }

.bookmarks { height: 43px; display: flex; align-items: center; padding: 0 0 8px 15px; background: #e4e4e4; color: #111; white-space: nowrap; }
.bm { font-size: 14.500px; letter-spacing: -.3px; }
.b1 { margin-left: 7px; width: 168px; letter-spacing: -.15px; }
.b2 { margin-left: 8px; width: 165px; letter-spacing: -.46px; }
.b3 { margin-left: 7px; width: 333px; letter-spacing: -.06px; }
.s3 { margin: 0 19px 0 22px; }
.b4 { margin-left: 8px; letter-spacing: -.15px; }

.viewport { display: grid; grid-template-columns: 938px 20px; grid-template-rows: 848px 20px; }
.page { background: #f9fafc; }
.driver { overflow: hidden; }
.appbar { height: 100px; background: #13194b; display: flex; align-items: center; padding-left: 63px; box-shadow: 0 8px 16px rgba(0, 0, 0, .13); }
.logo { margin-bottom: 2px; }
.brand { font: 700 44px "DejaVu Sans", sans-serif; }
.tagline { font: italic 18px "Lato", sans-serif; fill: #090b22; }
.user { margin-left: 348px; width: 50px; height: 50px; border-radius: 50%; background: #fff; display: flex; align-items: center; justify-content: center; }
.burger { margin-left: 318px; width: 34px; display: flex; flex-direction: column; gap: 6px; }
.burger i { height: 5.500px; border-radius: 2px; background: #6b7280; }
.mapbox { position: relative; margin: 45px 0 0 25px; width: 909px; height: 320px; border-radius: 9px; overflow: hidden; font-family: Roboto, sans-serif; box-shadow: 0 1px 3px rgba(0, 0, 0, .1); }
.minor { fill: none; stroke: #c3c9d6; stroke-width: 3; stroke-linejoin: round; }
.roads { fill: none; stroke: #8797c0; stroke-width: 9; stroke-linejoin: round; }
.fill { fill: none; stroke: #a8b9da; stroke-width: 5; stroke-linejoin: round; }
#net { fill: none; }
.shield { font: 700 34px Roboto, sans-serif; text-anchor: middle; }
.shield text { fill: #fbe13e; }
.nat { font: 700 34px Roboto, sans-serif; text-anchor: middle; fill: #fff; }
.town { font: 400 43px Roboto, sans-serif; fill: #3c4043; stroke: #fff; stroke-width: 6px; stroke-opacity: .85; paint-order: stroke; stroke-linejoin: round; }
.city { font: 500 55px Roboto, sans-serif; fill: #26282b; stroke: #fff; stroke-width: 7px; stroke-opacity: .85; paint-order: stroke; stroke-linejoin: round; }
.city .capital { font-size: 74px; font-weight: 500; fill: #303236; }
.google { font: 400 68px "Lato", sans-serif; stroke-width: 2.500px; }
.maptype { position: absolute; left: 13px; top: 13px; display: flex; height: 50px; background: #fff; border-radius: 3px; box-shadow: 0 1px 5px rgba(0, 0, 0, .3); font-size: 22.500px; line-height: 49px; text-align: center; color: #565656; }
.maptype span { width: 123px; }
.maptype .on { width: 87px; color: #000; font-weight: 500; border-right: 1px solid #e6e6e6; }
.mapctl { position: absolute; right: 12px; top: 13px; display: flex; flex-direction: column; }
.mbtn, .zoomctl { width: 50px; height: 50px; background: #fff; border-radius: 3px; box-shadow: 0 1px 5px rgba(0, 0, 0, .3); display: flex; align-items: center; justify-content: center; }
.mbtn svg { margin-right: 2px; }
.peg { margin-top: 36px; }
.zoomctl { margin-top: 40px; height: 101px; flex-direction: column; gap: 14px; }
.zoomctl i { width: 37px; height: 1px; background: #e3e3e3; }
.attrib { position: absolute; right: 0; bottom: 0; width: 493px; height: 17px; background: rgba(245, 245, 245, .72); display: flex; padding-left: 6px; font-size: 12.500px; line-height: 17px; color: #111; white-space: nowrap; }
.a1 { width: 124px; } .a2 { width: 201px; } .a3 { width: 50px; }
.loading { margin: 12px 0 0 25px; font-size: 19px; line-height: 28px; color: #222; letter-spacing: -.07px; }
.vbar { background: #ececec; display: flex; flex-direction: column; }
.vbar i { width: 17px; height: 691px; margin: 0 0 113px 2px; background: #bdbdbd; }
.hbar { background: #f0f0f0; display: flex; border-top: 1px solid #f0f0f0; }
.hbar i { width: 876px; height: 17px; margin: 1px 20px 0 0; background: #c1c1c1; }
.corner { background: #d4d4d4; }
.shade { position: absolute; right: 0; top: 0; width: 48px; height: 1018px; background: linear-gradient(90deg, rgba(0, 0, 0, 0), rgba(0, 0, 0, .04) 50%, rgba(0, 0, 0, .17)); }

.pay { flex: 1; background: #fff; padding: 275px 0 0 240px; }
.card { width: 480px; height: 320px; background: #f9fafc; border-radius: 5px; box-shadow: 0 5px 8px rgba(0, 0, 0, .12), 0 1px 4px rgba(0, 0, 0, .05); }
.total, .details { margin: 0; padding: 11px 10px 0; height: 50px; font-size: 18.500px; line-height: 30px; font-weight: 700; color: #000; letter-spacing: 0; }
.total { letter-spacing: .28px; }
.field { height: 71px; padding: 10px 31px 0 20px; display: flex; align-items: center; font: 17.500px "Liberation Sans", sans-serif; color: #7f8287; }
.field .num { margin-left: 9px; flex: 1; }
.field .exp { margin-right: 10px; }
.paybtn { display: block; width: 476px; height: 50px; border: 0; border-radius: 8px; background: #005bb5; color: #fff; font: 500 19px "Open Sans", sans-serif; padding: 1px 0 0; }

.taskbar { height: 60px; border-top: 1px solid #aaa; background: linear-gradient(90deg, #e2dfea, #ecdee2 12%, #e9e0e2 25%, #eddfdc 45%, #eae0df 62%, #e3dfe6 78%, #e9dce3 90%, #e5dce6); display: flex; justify-content: space-between; }
.apps { display: flex; margin-left: 355px; align-items: center; }
.app { width: 55.050px; height: 50px; margin-top: -1px; display: flex; align-items: center; justify-content: center; position: relative; }
.run::after, .chrome::after, .alert::after { content: ""; position: absolute; bottom: 1px; left: 24px; width: 8px; height: 4px; border-radius: 2px; background: #858080; }
.chrome::before { content: ""; position: absolute; left: 5px; top: 1px; width: 48px; height: 48px; border-radius: 5px; background: linear-gradient(90deg, #f6f1f0 43px, #ddd4d4 43px, #ddd4d4 44px, #f3edec 44px); box-shadow: 0 0 1px #aaa; }
.chrome svg { position: relative; top: -5px; left: 4px; }
.chrome::after { width: 20px; left: 19px; background: #0a78d4; }
.alert::before { content: ""; position: absolute; left: 4px; top: 0; width: 50px; height: 50px; border-radius: 5px; background: #e9b0ac; }
.alert svg { position: relative; }
.alert::after { left: 25px; background: #c42b1c; }
.badge { font: 500 12px Roboto, sans-serif; fill: #eee; text-anchor: middle; }
.office text { font: 700 14px "Open Sans", sans-serif; fill: #fff; text-anchor: middle; }
.tray { display: flex; align-items: center; padding-right: 26px; font-size: 14.500px; line-height: 20px; letter-spacing: -.3px; color: #111; }
.lang { margin-left: 25px; width: 30px; text-align: center; letter-spacing: -.1px; }
.wifi { margin-left: 22px; }
.vol { margin-left: 10px; }
.bat { margin-left: 10px; }
.clock { margin-left: 17px; width: 80px; text-align: right; margin-right: 11px; letter-spacing: .05px; }
```
